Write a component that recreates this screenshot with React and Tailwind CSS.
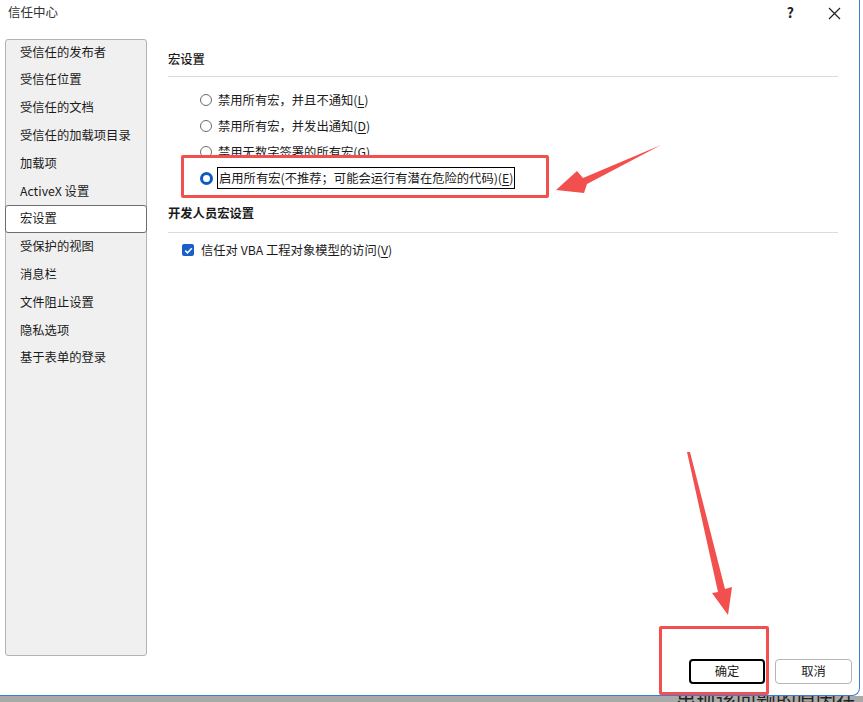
import React from 'react';

const NAV = [
  '受信任的发布者',
  '受信任位置',
  '受信任的文档',
  '受信任的加载项目录',
  '加载项',
  'ActiveX 设置',
  '宏设置',
  '受保护的视图',
  '消息栏',
  '文件阻止设置',
  '隐私选项',
  '基于表单的登录',
];

const RADIOS = [
  { label: '禁用所有宏，并且不通知', key: 'L' },
  { label: '禁用所有宏，并发出通知', key: 'D' },
  { label: '禁用无数字签署的所有宏', key: 'G' },
];

const Radio = ({ checked }) =>
  checked ? (
    <span className="w-[13px] h-[13px] rounded-full border-[3.5px] border-[#0b5cc2] bg-white shrink-0" />
  ) : (
    <span className="w-[12px] h-[12px] rounded-full border border-[#6a6a6a] bg-white shrink-0" />
  );

const Key = ({ k }) => (
  <>
    (<span className="underline underline-offset-2">{k}</span>)
  </>
);

export default function App() {
  return (
    <div className="relative w-[863px] h-[702px] overflow-hidden bg-white text-[12.3px] text-[#1b1b1b] font-['Noto_Sans_CJK_SC','Noto_Sans',sans-serif]">
      {/* dialog */}
      <div className="w-[860px] h-[696px] bg-white border-r border-b border-[#3d7bd6] rounded-br-[8px] flex flex-col">
        <div className="h-[39px] flex items-start justify-between">
          <span className="ml-[8px] mt-[3px] text-[12.5px] text-[#333]">信任中心</span>
          <div className="flex items-center mt-[2px] mr-[18px] gap-[34px]">
            <span className="text-[14px] font-semibold text-[#222]">?</span>
            <svg width="13" height="13" viewBox="0 0 13 13" className="mt-[2px]">
              <path d="M1 1 L12 12 M12 1 L1 12" stroke="#222" strokeWidth="1.2" fill="none" />
            </svg>
          </div>
        </div>

        <div className="flex">
          <nav className="ml-[5px] w-[142px] h-[617px] bg-[#f0f0f0] border border-[#b3b3b3] rounded-[3px]">
            <div className="-mt-[2px]">
              {NAV.map((item) => (
                <div
                  key={item}
                  className={`h-[27.8px] flex items-center pl-[14px] ${
                    item === '宏设置' ? 'bg-white border border-[#6d6d6d] rounded-[3px] -mx-px' : ''
                  }`}
                >
                  {item}
                </div>
              ))}
            </div>
          </nav>

          <section className="ml-[21px] w-[670px] pt-[11px]">
            <div className="h-[18px] flex items-center font-medium">宏设置</div>
            <div className="mt-[8px] h-px bg-[#dcdcdc]" />
            <div className="mt-[10px] pl-[32px]">
              {RADIOS.map((r) => (
                <div key={r.key} className="h-[26px] flex items-center gap-[6px]">
                  <Radio />
                  <span>
                    {r.label}
                    <Key k={r.key} />
                  </span>
                </div>
              ))}
              <div className="relative z-10 h-[26px] flex items-center gap-[4px]">
                <Radio checked />
                <span className="border-[1.5px] border-black px-[1px] leading-[20px]">
                  启用所有宏(不推荐；可能会运行有潜在危险的代码)
                  <Key k="E" />
                </span>
              </div>
            </div>

            <div className="mt-[13px] h-[18px] flex items-center font-semibold">开发人员宏设置</div>
            <div className="mt-[10px] h-px bg-[#dcdcdc]" />
            <div className="mt-[4px] pl-[14px] h-[26px] flex items-center gap-[7px]">
              <span className="w-[12px] h-[12px] rounded-[2px] bg-[#1a5fc9] flex items-center justify-center">
                <svg width="9" height="9" viewBox="0 0 9 9">
                  <path d="M1.3 4.6 L3.5 6.8 L7.8 2.2" stroke="white" strokeWidth="1.5" fill="none" />
                </svg>
              </span>
              <span>
                信任对 VBA 工程对象模型的访问
                <Key k="V" />
              </span>
            </div>
          </section>
        </div>

        <div className="flex justify-end gap-[10px] pr-[7px] mt-[3px]">
          <button className="w-[76px] h-[25px] border-2 border-black rounded-[4px] bg-white flex items-center justify-center">
            确定
          </button>
          <button className="w-[77px] h-[25px] border border-[#b5b5b5] rounded-[4px] bg-white flex items-center justify-center">
            取消
          </button>
        </div>
      </div>

      {/* background document strip */}
      <div className="h-[6px] bg-[#a9a9a9] overflow-hidden">
        <span className="block ml-[676px] -mt-[7px] text-[20px] leading-[22px] text-[#222]">出现该问题的原因在</span>
      </div>

      {/* annotations */}
      <div className="absolute left-[181px] top-[155px] w-[368px] h-[43px] bg-white border-[3px] border-[#f24f4f] rounded-[2px]" />
      <div className="absolute left-[659px] top-[626px] w-[110px] h-[69px] border-[3px] border-[#f24f4f] rounded-[2px]" />
      <svg className="absolute left-0 top-0 pointer-events-none" width="863" height="702">
        <polygon
          points="556,190 577,171 583,178 661,145 587,184 584,193"
          fill="#f24f4f"
        />
        <polygon
          points="687,452 690,452 725,589 732,587 728,615 712,593 718,592"
          fill="#f24f4f"
        />
      </svg>
    </div>
  );
}
